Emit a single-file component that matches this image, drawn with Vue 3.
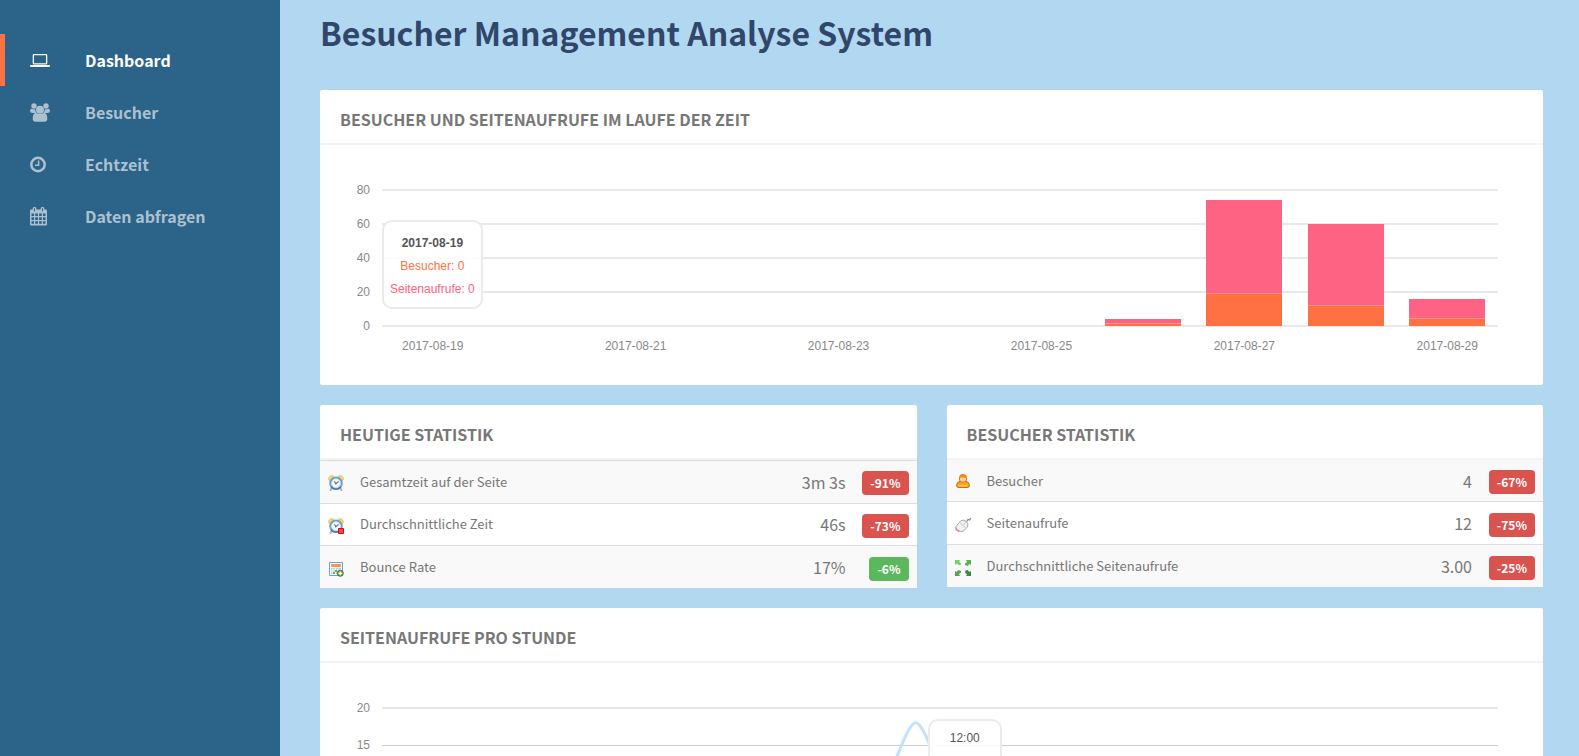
<script setup>
const nav = [
  { label: 'Dashboard', icon: 'laptop', active: true },
  { label: 'Besucher', icon: 'users' },
  { label: 'Echtzeit', icon: 'clock' },
  { label: 'Daten abfragen', icon: 'calendar' },
]

const days = [
  ...Array.from({ length: 7 }, (_, i) => ({ date: `2017-08-${19 + i}`, visitors: 0, views: 0 })),
  { date: '2017-08-26', visitors: 1, views: 3 },
  { date: '2017-08-27', visitors: 19, views: 55 },
  { date: '2017-08-28', visitors: 12, views: 48 },
  { date: '2017-08-29', visitors: 4, views: 12 },
]
const dayMax = 80
const pct = (v) => `${(v / dayMax) * 100}%`

const tables = [
  {
    title: 'Heutige Statistik',
    kind: 'today',
    rows: [
      { icon: 'alarm', label: 'Gesamtzeit auf der Seite', value: '3m 3s', change: '-91%' },
      { icon: 'alarmstop', label: 'Durchschnittliche Zeit', value: '46s', change: '-73%' },
      { icon: 'sheet', label: 'Bounce Rate', value: '17%', change: '-6%', good: true },
    ],
  },
  {
    title: 'Besucher Statistik',
    kind: 'audience',
    rows: [
      { icon: 'person', label: 'Besucher', value: '4', change: '-67%' },
      { icon: 'mouse', label: 'Seitenaufrufe', value: '12', change: '-75%' },
      { icon: 'arrows', label: 'Durchschnittliche Seitenaufrufe', value: '3.00', change: '-25%' },
    ],
  },
]

const hours = [1, 0, 0, 0, 0, 1, 0, 2, 1, 3, 5, 18, 5, 2, 4, 1, 3, 0, 2, 1, 0, 1, 0, 0]
const points = hours.map((v, i) => [(i / (hours.length - 1)) * 1116, 148 - v * 7.4])
const curve = points
  .map(([x, y], i) => {
    if (!i) return `M${x} ${y}`
    const [px, py] = points[i - 1]
    const c = (x - px) / 4
    return `C${px + c} ${py} ${x - c} ${y} ${x} ${y}`
  })
  .join('')
</script>

<template>
  <div class="layout">
    <nav class="sidebar">
      <a v-for="n in nav" :key="n.label" href="#" class="nav-item" :class="{ active: n.active }">
        <svg class="nav-icon" viewBox="0 0 20 20" aria-hidden="true">
          <path v-if="n.icon === 'laptop'" fill-rule="evenodd" d="M4 4h12q1.300 0 1.300 1.300v7.900q0 1.300-1.300 1.300H4q-1.300 0-1.300-1.300V5.300Q2.700 4 4 4ZM4 5.300v7.900h12V5.300ZM0 15h20v.8q0 1.200-1.400 1.200H1.400Q0 17 0 15.800Z" />
          <template v-else-if="n.icon === 'users'">
            <circle cx="4" cy="4" r="2.700" />
            <circle cx="16" cy="4" r="2.700" />
            <path d="M2 6.700q2 1.300 3.200.4Q5 9.500 6.500 11H2.500Q0 11 0 9 0 6.500 2 6.700ZM18 6.700q-2 1.300-3.200.4.200 2.400-1.300 3.900h4Q20 11 20 9 20 6.500 18 6.700Z" />
            <circle cx="10" cy="7.700" r="4" />
            <path d="M6.200 10.800q3.800 2.600 7.600 0 3.500.2 3.500 6 0 3-3 3H5.700q-3 0-3-3 0-5.800 3.500-6Z" />
          </template>
          <g v-else-if="n.icon === 'clock'" fill="none" stroke="currentColor">
            <circle cx="8" cy="10.500" r="6.700" stroke-width="2.500" />
            <path d="M8.600 6.500v4.800H5" stroke-width="1.500" />
          </g>
          <path v-else fill-rule="evenodd" d="M1.300 3.500H2.700V2.300Q2.700 1 4.500 1T6.300 2.300v1.200h4.400V2.300Q10.700 1 12.500 1t1.800 1.300v1.200h1.400q1.300 0 1.300 1.300v13.400q0 1.300-1.300 1.300H1.300Q0 19.500 0 18.200V4.800Q0 3.500 1.300 3.500ZM4 2.300v3h1v-3ZM12 2.300v3h1v-3ZM1.500 7.500v2.600h2.500V7.500ZM5.200 7.500v2.600h2.700V7.500ZM9.100 7.500v2.600h2.700V7.500ZM13 7.500v2.600h2.500V7.500ZM1.500 11.300v2.700h2.500v-2.700ZM5.200 11.300v2.700h2.700v-2.700ZM9.100 11.300v2.700h2.700v-2.700ZM13 11.300v2.700h2.500v-2.700ZM1.500 15.200v2.600h2.500v-2.600ZM5.200 15.200v2.600h2.700v-2.600ZM9.100 15.200v2.600h2.700v-2.600ZM13 15.200v2.600h2.500v-2.600Z" />
        </svg>
        <span>{{ n.label }}</span>
      </a>
    </nav>

    <main class="content">
      <h1>Besucher Management Analyse System</h1>

      <section class="card">
        <h2>Besucher und Seitenaufrufe im Laufe der Zeit</h2>
        <div class="chart">
          <div class="axis-y daily">
            <span v-for="t in [80, 60, 40, 20, 0]" :key="t">{{ t }}</span>
          </div>
          <div class="plot">
            <div class="grid daily"><i v-for="t in 5" :key="t"></i></div>
            <div class="bars">
              <div v-for="d in days" :key="d.date" class="bar">
                <div class="views" :style="{ height: pct(d.views) }"></div>
                <div class="visitors" :style="{ height: pct(d.visitors) }"></div>
              </div>
            </div>
            <div class="tooltip day-tip">
              <strong>2017-08-19</strong>
              <span class="t-visitors">Besucher: 0</span>
              <span class="t-views">Seitenaufrufe: 0</span>
            </div>
          </div>
          <div class="axis-x">
            <span v-for="(d, i) in days" :key="d.date">{{ i % 2 ? '' : d.date }}</span>
          </div>
        </div>
      </section>

      <div class="pair">
        <section v-for="t in tables" :key="t.title" class="card">
          <h2>{{ t.title }}</h2>
          <table :class="t.kind">
            <tbody>
              <tr v-for="r in t.rows" :key="r.label">
                <td class="c-icon">
                  <svg viewBox="0 0 16 16" aria-hidden="true">
                    <template v-if="r.icon === 'alarm' || r.icon === 'alarmstop'">
                      <path d="M4 12.500 2.500 15M12 12.500l1.500 2.500" stroke="#b5b5b5" stroke-width="2" stroke-linecap="round" />
                      <path d="M.8 5Q0 3 1.500 1.500T5 .8L6.300 2 2 6ZM15.200 5q.8-2-.7-3.500T11 .8L9.700 2 14 6Z" fill="#f9d468" stroke="#e9bc50" stroke-width=".7" />
                      <circle cx="8" cy="8.300" r="5.600" fill="#f5faff" stroke="#6a9fd4" stroke-width="2.300" />
                      <path d="M3.200 11.800a6 6 0 0 0 9.600 0" fill="none" stroke="#4377b4" stroke-width="1.800" />
                      <circle cx="8" cy="8.300" r="4.500" fill="none" stroke="#c6def4" />
                      <path d="m6.500 6.300 1.300 2.600 2.700-2.600" fill="none" stroke="#666" stroke-width="1.100" />
                      <path v-if="r.icon === 'alarmstop'" d="M10.500 10.500h5v5h-5Z" fill="#f54444" stroke="#d70909" />
                    </template>
                    <template v-else-if="r.icon === 'sheet'">
                      <path d="M1.500 1.500h13v13h-13Z" fill="#f8fbff" stroke="#6e9edb" />
                      <path d="M3 3h10v3H3Z" fill="#f79552" />
                      <path d="M3 7h10v6H3Z" fill="#b6c7d9" />
                      <path d="M5 7v6M7.500 7v6M10 7v6M3 9h10M3 11h10" stroke="#fff" stroke-width=".8" />
                      <path d="M5 11h2v2H5ZM7 9h2v2H7Z" fill="#5faf5b" />
                      <circle cx="12.300" cy="12.300" r="3" fill="#6ba845" stroke="#457b29" />
                      <path d="M12.300 10.400v3.800M10.400 12.300h3.800" stroke="#fff" stroke-width="1.300" />
                    </template>
                    <template v-else-if="r.icon === 'person'">
                      <path d="M1.500 11.500q0-3.500 4-4.500h5q4 1 4 4.500 0 2-2.500 2H4q-2.500 0-2.500-2Z" fill="#f9a51c" stroke="#c96e08" />
                      <path d="M3.500 11.500q4.500 1 9 0" fill="none" stroke="#ffcf58" stroke-width="1.200" />
                      <path d="M4.500 3.500Q4.500.5 8 .5t3.500 3V6Q11 8.300 8 8.300T4.500 6Z" fill="#f7cda4" stroke="#d97b0f" />
                      <path d="M4.500 4.500Q4 .5 8 .5t3.500 4L10 3.500H6Z" fill="#f28a0c" />
                    </template>
                    <template v-else-if="r.icon === 'mouse'">
                      <path d="m11.500 5 1.500-2.500 1.500.5L15.800.8" fill="none" stroke="#888" stroke-width="1.200" />
                      <path d="M1 9.500 5.500 4Q8 2 11 4.300t1.500 5.500L8.500 14Q5.500 15.500 2 13.400.2 11.500 1 9.500Z" fill="#f2f2f2" stroke="#aaa" />
                      <path d="m4.500 5.500 6.500 6M8 8.500 11 5" fill="none" stroke="#c6c6c6" />
                      <path d="M1 10.500q0 3 3.200 3.700" fill="none" stroke="#f08080" stroke-width="1.500" />
                    </template>
                    <template v-else>
                      <path d="M0 0h5L4.200 1.500 6 3.500 5.500 5 3.500 5 2 3.500 0 5Z" fill="#7ccb70" />
                      <path d="M16 0v5l-1.500-1L12.500 6 10 5V3.500L12 2l-1-2Z" fill="#5bb05a" />
                      <path d="M0 16v-5l1.500 1L3.500 10 6 11v1.500L4 14l1 2Z" fill="#54a553" />
                      <path d="M16 16h-5l1-1.500-2-2 .5-2 2-.5L14.500 12l1.500-1Z" fill="#398a42" />
                    </template>
                  </svg>
                </td>
                <td class="c-label">{{ r.label }}</td>
                <td class="c-value">{{ r.value }}</td>
                <td class="c-change"><span class="badge" :class="{ good: r.good }">{{ r.change }}</span></td>
              </tr>
            </tbody>
          </table>
        </section>
      </div>

      <section class="card">
        <h2>Seitenaufrufe pro Stunde</h2>
        <div class="chart">
          <div class="axis-y hourly">
            <span v-for="t in [20, 15, 10, 5, 0]" :key="t">{{ t }}</span>
          </div>
          <div class="plot">
            <div class="grid hourly"><i v-for="t in 5" :key="t"></i></div>
            <svg class="line" viewBox="0 0 1116 148" preserveAspectRatio="none" aria-hidden="true">
              <path :d="curve" vector-effect="non-scaling-stroke" />
            </svg>
            <div class="tooltip hour-tip">
              <span>12:00</span>
              <span>Heute: 18</span>
            </div>
          </div>
        </div>
      </section>
    </main>
  </div>
</template>

<style>
html {
  scrollbar-width: none;
}
body {
  margin: 0;
}
</style>

<style scoped>
.layout {
  display: flex;
  align-items: flex-start;
  min-height: 100vh;
  background: #b2d8f1;
  color: #777;
  font-family: "Noto Sans CJK SC", "Open Sans", sans-serif;
}
.sidebar {
  position: sticky;
  top: 0;
  flex: none;
  box-sizing: border-box;
  width: 280px;
  height: 100vh;
  padding-top: 34px;
  background: #2c6389;
}
.nav-item {
  display: flex;
  align-items: center;
  box-sizing: border-box;
  height: 52px;
  padding-left: 25px;
  border-left: 5px solid transparent;
  color: #abc1d0;
  font-size: 16px;
  font-weight: 700;
  line-height: 24px;
  text-decoration: none;
}
.nav-item.active {
  border-color: #ff7043;
  color: #fff;
}
.nav-icon {
  width: 20px;
  height: 20px;
  margin-right: 35px;
  fill: currentColor;
}
.content {
  flex: 1;
  min-width: 0;
  padding: 10px 36px 20px 40px;
}
h1 {
  margin: 0 0 36px;
  color: #30466a;
  font-size: 32px;
  font-weight: 700;
  line-height: 44px;
}
.card {
  margin-bottom: 20px;
  border-radius: 2px;
  background: #fff;
}
h2 {
  margin: 0;
  padding: 17px 20px 12px;
  border-bottom: 2px solid #f3f3f3;
  font-size: 16px;
  font-weight: 700;
  line-height: 24px;
  text-transform: uppercase;
}
.pair {
  display: grid;
  grid-template-columns: 1fr 1fr;
  gap: 30px;
  align-items: start;
}
.chart {
  display: grid;
  grid-template-columns: 30px 1fr;
  column-gap: 12px;
  padding: 45px 45px 31px 20px;
  font-family: "Liberation Sans", Arial, sans-serif;
  font-size: 12px;
}
.axis-y,
.grid {
  display: flex;
  flex-direction: column;
}
.axis-y {
  color: #888;
  text-align: right;
}
.axis-y span,
.grid i {
  display: flex;
  align-items: center;
  height: 0;
}
.axis-y span {
  justify-content: flex-end;
}
.daily {
  gap: 34px;
}
.hourly {
  gap: 37px;
}
.grid i::after {
  content: "";
  width: 100%;
  height: 2px;
  flex: none;
  background: #e9e9e9;
}
.grid.hourly i:not(:first-child)::after {
  height: 1px;
  background: #ccc;
}
.plot {
  position: relative;
}
.bars {
  position: absolute;
  inset: 0;
  display: flex;
}
.bar {
  display: flex;
  flex: 1;
  flex-direction: column;
  justify-content: flex-end;
  align-items: center;
}
.views,
.visitors {
  width: 75%;
}
.views {
  background: #ff6384;
}
.visitors {
  box-shadow: 0 -1px #ff8e90;
  background: #ff7043;
}
.bar .visitors[style*="0%"] {
  box-shadow: none;
}
.axis-x {
  display: flex;
  grid-column: 2;
  padding-top: 12px;
  color: #888;
  line-height: 16px;
}
.axis-x span {
  flex: 1;
  text-align: center;
}
.tooltip {
  position: absolute;
  display: flex;
  flex-direction: column;
  align-items: center;
  box-sizing: border-box;
  border: 2px solid #ebebeb;
  border-radius: 10px;
  background: rgba(255, 255, 255, 0.88);
  color: #555;
  line-height: 23px;
  white-space: nowrap;
}
.day-tip {
  top: 30px;
  left: 0;
  padding: 10px 6px 6px;
}
.hour-tip {
  top: 11px;
  left: 48.9%;
  padding: 6px 9px;
}
.t-visitors {
  color: #ff7043;
}
.t-views {
  color: #ff6384;
}
.line {
  position: absolute;
  inset: 0;
  width: 100%;
  height: 100%;
  fill: none;
  stroke: #c2e1fa;
  stroke-width: 3;
}
table {
  width: 100%;
  border-spacing: 0;
}
.today {
  height: 128px;
}
.audience {
  height: 127px;
}
td {
  padding: 0 8px;
  border-top: 1px solid #ddd;
}
.audience tr:first-child td {
  border-top: 0;
}
tr:nth-child(odd) {
  background: #f9f9f9;
}
.c-icon,
.c-change {
  padding-top: 3px;
}
.c-icon {
  width: 16px;
}
.c-icon svg {
  display: block;
  width: 16px;
  height: 16px;
}
.c-label {
  font-size: 13px;
  line-height: 20px;
}
.c-value {
  width: 80px;
  font-size: 16px;
  line-height: 20px;
  text-align: right;
}
.c-change {
  width: 47px;
  text-align: right;
}
.badge {
  display: block;
  width: fit-content;
  margin-left: auto;
  padding: 2px 8px;
  border-radius: 4px;
  background: #d9534f;
  color: #fff;
  font-size: 12px;
  font-weight: 700;
  line-height: 20px;
}
.badge.good {
  background: #5cb85c;
}
</style>
